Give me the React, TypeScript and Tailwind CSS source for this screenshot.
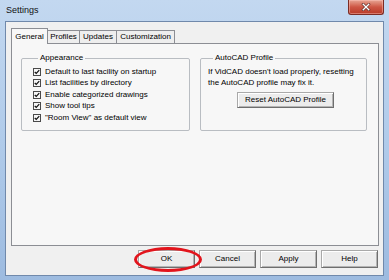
import type { ReactNode } from "react";

const options = [
  "Default to last facility on startup",
  "List facilities by directory",
  "Enable categorized drawings",
  "Show tool tips",
  "\"Room View\" as default view",
];

const tabs = [
  { label: "General", w: "w-[37px]", active: true },
  { label: "Profiles", w: "w-[33px]", active: false },
  { label: "Updates", w: "w-[38px]", active: false },
  { label: "Customization", w: "w-[59px]", active: false },
];

function CheckBox() {
  return (
    <span className="flex h-[8px] w-[8px] shrink-0 items-center justify-center border border-[#4a4a4a] bg-[#f6f6f6]">
      <svg viewBox="0 0 8 8" className="h-[6px] w-[6px]">
        <path d="M1 4 L3 6 L7 1.5" fill="none" stroke="#111" strokeWidth="1.6" />
      </svg>
    </span>
  );
}

function GroupBox({ title, className, children }: { title: string; className: string; children: ReactNode }) {
  return (
    <fieldset className={`rounded-[2px] border border-[#b9bdc2] ${className}`}>
      <legend className="ml-[5px] px-[2px] text-[8px] leading-[10px]">{title}</legend>
      {children}
    </fieldset>
  );
}

function WinButton({ children, className }: { children: ReactNode; className: string }) {
  return (
    <button
      type="button"
      className={`flex items-center justify-center border border-[#a9a9a9] border-r-[#6e6e6e] border-b-[#6e6e6e] bg-[#ececec] text-[8px] leading-none text-black shadow-[inset_1px_1px_0_#ffffff,inset_-1px_-1px_0_#b4b4b4] ${className}`}
    >
      {children}
    </button>
  );
}

export default function App() {
  return (
    <div className="relative flex h-[280px] w-[389px] flex-col bg-gradient-to-b from-[#c3d8f0] via-[#b0cbea] to-[#9dbbe0] font-['Liberation_Sans',Arial,sans-serif] text-black">
      {/* title bar */}
      <div className="flex h-[21px] shrink-0 items-start justify-between">
        <span className="pl-[6px] pt-[5px] text-[9px] leading-[11px] text-[#111]">Settings</span>
        <div className="mr-[5px] flex h-[15px] w-[36px] items-center justify-center rounded-b-[3px] border border-t-0 border-[#7b2c24] bg-gradient-to-b from-[#e7a594] via-[#cd5644] to-[#b83a28] shadow-[inset_0_0_0_1px_rgba(255,200,190,0.45)]">
          <svg viewBox="0 0 12 10" className="h-[8px] w-[10px]">
            <path d="M2.5 1.5 L9.5 8.5 M9.5 1.5 L2.5 8.5" stroke="#5a2520" strokeWidth="3.2" strokeLinecap="square" />
            <path d="M2.5 1.5 L9.5 8.5 M9.5 1.5 L2.5 8.5" stroke="#ffffff" strokeWidth="1.7" strokeLinecap="square" />
          </svg>
        </div>
      </div>

      {/* client area */}
      <div className="mx-[5px] flex h-[255px] flex-col border border-[#7089ab] bg-[#f0f0f0] pl-[5px] pr-[4px] pt-[6px]">
        {/* tab strip */}
        <div className="flex h-[15px] items-end">
          {tabs.map((t) =>
            t.active ? (
              <div
                key={t.label}
                className={`${t.w} relative z-10 -mb-px flex h-[16px] items-center justify-center border border-b-0 border-[#8c8e94] bg-[#f7f7f7] text-[8px] leading-none`}
              >
                {t.label}
              </div>
            ) : (
              <div
                key={t.label}
                className={`${t.w} -ml-px flex h-[13px] items-center justify-center border border-b-0 border-[#8c8e94] bg-[#eeeeee] text-[8px] leading-none first:ml-0`}
              >
                {t.label}
              </div>
            ),
          )}
        </div>

        {/* tab panel */}
        <div className="flex h-[203px] items-start gap-[10px] border border-[#8c8e94] bg-[#f7f7f7] pl-[9px] pt-[9px]">
          <GroupBox title="Appearance" className="flex w-[169px] flex-col pb-[6px] pl-[11px] pt-[3px]">
            {options.map((o) => (
              <div key={o} className="flex h-[11.5px] items-center gap-[4px] text-[8px] leading-none">
                <CheckBox />
                <span>{o}</span>
              </div>
            ))}
          </GroupBox>
          <GroupBox title="AutoCAD Profile" className="flex h-[78px] w-[167px] flex-col pl-[7px] pt-[3px]">
            <p className="text-[8px] leading-[11px]">
              If VidCAD doesn't load properly, resetting
              <br />
              the AutoCAD profile may fix it.
            </p>
            <WinButton className="ml-[29px] mt-[3.5px] h-[16px] w-[97px]">Reset AutoCAD Profile</WinButton>
          </GroupBox>
        </div>

        {/* dialog buttons */}
        <div className="flex justify-end gap-[4px] pr-[1px] pt-[4px]">
          <WinButton className="h-[18px] w-[57px] border-[#5e5e5e]">OK</WinButton>
          <WinButton className="h-[18px] w-[57px]">Cancel</WinButton>
          <WinButton className="h-[18px] w-[57px]">Apply</WinButton>
          <WinButton className="h-[18px] w-[57px]">Help</WinButton>
        </div>
      </div>

      {/* red highlight around OK */}
      <div className="pointer-events-none absolute left-[134px] top-[247px] h-[25px] w-[68px] rounded-[50%] border-[3px] border-[#e2141c]" />
    </div>
  );
}
